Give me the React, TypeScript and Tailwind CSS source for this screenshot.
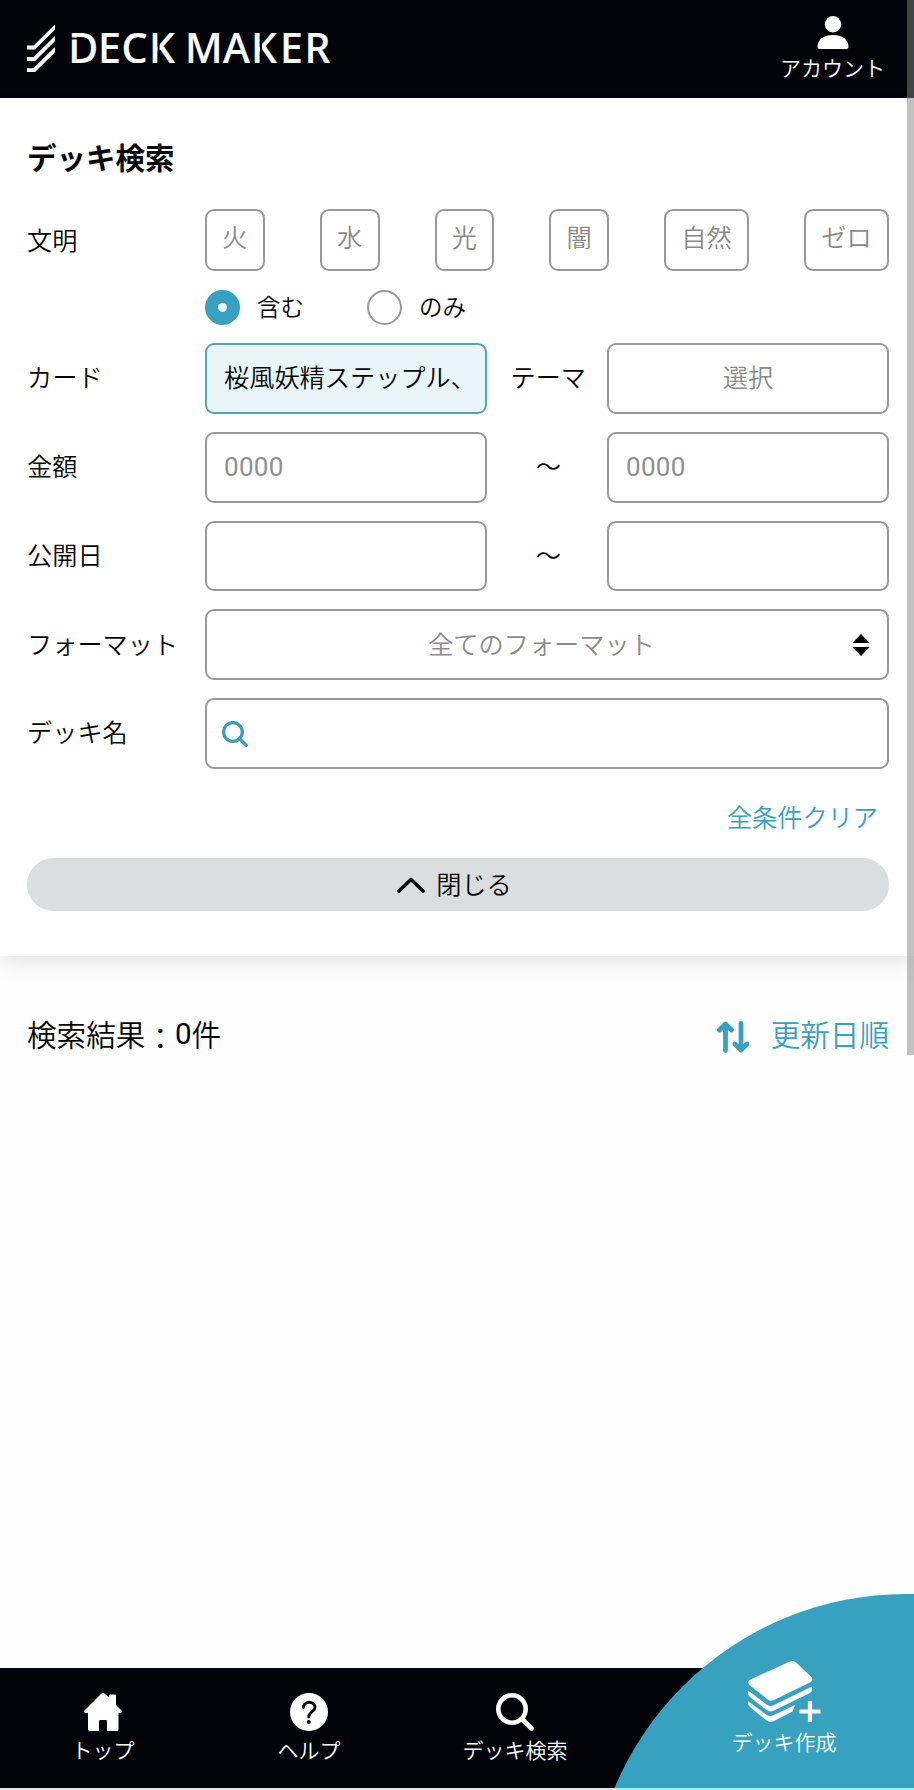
import type { ReactNode } from "react";

const chips = ["火", "水", "光", "闇", "自然", "ゼロ"];

function Logo() {
  return (
    <svg width="310" height="60" viewBox="0 0 310 60" role="img" aria-label="DECK MAKER">
      <g fill="none" stroke="#fff" strokeWidth="3.800">
        <path d="M0 31.500H7.300L29 10" />
        <path d="M0 43H7.300L29 21.500" />
        <path d="M0 54.200H7.300L29 32.700" />
      </g>
      <path d="M28 0H36V60H28Z" fill="#020409" />
      <text
        x="41.3 71 94.5 122 158 196 224 253 277.5"
        y="46.700"
        fill="#fff"
        stroke="#fff"
        strokeWidth="0.2"
        fontSize="41"
        className="font-['Noto_Sans'] font-medium"
      >
        DECKMAKER
      </text>
      <g stroke="#020409" strokeWidth="2" fill="none">
        <path d="M43 22.500H50" />
        <path d="M131.600 15V49" />
        <path d="M234 15V49" />
      </g>
    </svg>
  );
}

function Row({ label, children }: { label: string; children?: ReactNode }) {
  return (
    <div className="flex h-[70.8px] items-center">
      <div className="w-[178px] shrink-0 pb-[3px] whitespace-nowrap">{label}</div>
      <div className="flex h-full flex-1 items-center">{children}</div>
    </div>
  );
}

function Box({ children, className }: { children?: ReactNode; className: string }) {
  return <div className={`flex h-full items-center rounded-[9px] border-2 ${className}`}>{children}</div>;
}

function Middle({ children }: { children: ReactNode }) {
  return <div className="flex-1 pb-[3px] pl-[3px] text-center">{children}</div>;
}

function SearchIcon({ size, stroke, className }: { size: number; stroke: number; className?: string }) {
  return (
    <svg width={size} height={size} viewBox="0 0 38 38" fill="none" stroke="currentColor" strokeWidth={stroke} strokeLinecap="round" className={className}>
      <circle cx="16" cy="16" r="13.7" />
      <path d="M26 26L35.5 35.5" />
    </svg>
  );
}

function NavItem({ label, children }: { label: string; children: ReactNode }) {
  return (
    <div className="flex w-[206px] flex-col items-center pt-[25px]">
      {children}
      <span className="mt-[3px] text-[21px] leading-[30px]">{label}</span>
    </div>
  );
}

export default function App() {
  return (
    <div className="relative flex h-[1790px] w-[914px] flex-col overflow-hidden bg-[#fefefe] font-['Noto_Sans_CJK_JP_DemiLight','Noto_Sans_CJK_JP',sans-serif] text-[25.2px] leading-none font-[350] text-[#050505]">
      <header className="flex h-[97.5px] shrink-0 justify-between bg-[#020409] pt-[16px] pr-[29px] pl-[27px] text-white">
        <Logo />
        <div className="flex flex-col items-center">
          <svg width="32" height="34" viewBox="0 0 32 34" fill="#fff">
            <circle cx="16" cy="8.3" r="8.2" />
            <path d="M.5 31C.5 23 7 19 16 19s15.500 4 15.500 12q0 2-2 2H2.500q-2 0-2-2Z" />
          </svg>
          <span className="mt-[2px] text-[21px] leading-[30px]">アカウント</span>
        </div>
      </header>

      <section className="flex h-[858px] shrink-0 flex-col bg-white pr-[25px] pl-[27px] shadow-[0_10px_20px_-2px_rgba(0,0,0,0.1)]">
        <h1 className="mt-[41.5px] font-['Noto_Sans_CJK_JP',sans-serif] text-[29.5px] leading-[34px] font-bold">デッキ検索</h1>

        <div className="mt-[36px] flex h-[62px] items-center">
          <div className="w-[178px] shrink-0">文明</div>
          <div className="flex h-full flex-1 justify-between text-[#8a8a8a]">
            {chips.map((c) => (
              <div key={c} className="flex h-full items-center rounded-[9px] border-2 border-[#999] px-[15.3px] pb-[6px]">
                {c}
              </div>
            ))}
          </div>
        </div>

        <div className="mt-[18px] ml-[178px] flex h-[36px] items-center text-[23.5px]">
          <span className="flex size-[35px] items-center justify-center rounded-full bg-[#38a1bf]">
            <span className="size-[9px] rounded-full bg-[#effcff]" />
          </span>
          <span className="ml-[17px] w-[110px] pb-[1px]">含む</span>
          <span className="size-[35px] rounded-full border-2 border-[#999]" />
          <span className="ml-[17px] pb-[1px]">のみ</span>
        </div>

        <div className="mt-[18px] flex flex-col gap-[18px]">
          <Row label="カード">
            <Box className="w-[281.5px] border-[#55a5b5] bg-[#e9f5f9] pb-[3px] pl-[17px] whitespace-nowrap">桜風妖精ステップル、</Box>
            <Middle>テーマ</Middle>
            <Box className="w-[282px] justify-center border-[#999] pb-[3px] text-[#8a8a8a]">選択</Box>
          </Row>
          <Row label="金額">
            <Box className="w-[281.5px] border-[#999] pl-[17px] font-[Roboto] text-[26px] font-normal tracking-[0.3px] text-[#8f8f8f]">0000</Box>
            <Middle>～</Middle>
            <Box className="w-[282px] border-[#999] pl-[17px] font-[Roboto] text-[26px] font-normal tracking-[0.3px] text-[#8f8f8f]">0000</Box>
          </Row>
          <Row label="公開日">
            <Box className="w-[281.5px] border-[#999]" />
            <Middle>～</Middle>
            <Box className="w-[282px] border-[#999]" />
          </Row>
          <Row label="フォーマット">
            <Box className="w-full border-[#999] pr-[17px] text-[#8a8a8a]">
              <span className="flex-1 pb-[3px] pl-[24px] text-center">全てのフォーマット</span>
              <svg width="18" height="22" viewBox="0 0 18 22" fill="#050505">
                <path d="M9 0L17.700 9H.3ZM.3 13H17.700L9 22Z" />
              </svg>
            </Box>
          </Row>
          <Row label="デッキ名">
            <Box className="w-full border-[#999] pl-[15px]">
              <SearchIcon size={26} stroke={4.8} className="text-[#3a9eb5]" />
            </Box>
          </Row>
        </div>

        <div className="mt-[34.5px] pr-[11px] text-right leading-[26px] text-[#38a1bf]">全条件クリア</div>

        <div className="mt-[29px] flex h-[53px] items-center justify-center rounded-full bg-[#dbdedf] pr-[7px]">
          <svg width="28" height="16" viewBox="0 0 28 16" fill="none" stroke="#050505" strokeWidth="3.600" strokeLinecap="round" strokeLinejoin="round">
            <path d="M2 14L14 2.500L26 14" />
          </svg>
          <span className="ml-[11px] pb-[3px]">閉じる</span>
        </div>
      </section>

      <div className="mt-[62px] flex h-[36px] shrink-0 items-center justify-between pr-[25px] pl-[27px] text-[29.6px]">
        <span className="flex pb-[1px] whitespace-nowrap">
          検索結果<span className="pt-[3px] font-medium">：</span>
          <span className="font-[Roboto] leading-[31px] font-normal">0</span>件
        </span>
        <div className="flex items-center text-[#38a1bf]">
          <svg width="32" height="32" viewBox="0 0 32 32" fill="none" stroke="currentColor" strokeWidth="4.800" strokeLinecap="round" strokeLinejoin="round" className="mt-[2px] mr-[22px]">
            <path d="M8.500 29.500V4M2.500 9L8.500 3L14.500 9M24 2.500V28M18 23L24 29L30 23" />
          </svg>
          <span className="pb-[3px]">更新日順</span>
        </div>
      </div>

      <nav className="mt-auto mb-[2px] flex h-[120.5px] shrink-0 bg-[#020409] text-white">
        <NavItem label="トップ">
          <svg width="38" height="38" viewBox="0 0 38 38" fill="#fff">
            <path d="M19 0Q20 0 21 1L25 4.500V2.500Q25 1.500 26 1.500H31Q32 1.500 32 2.500V12L37.500 17.500Q38.500 19 37 20H34.500V36.500Q34.500 38 33 38H23V28Q23 27 22 27H16Q15 27 15 28V38H5.500Q4 38 4 36.500V20H1Q-.5 19 .5 17.500L17 1Q18 0 19 0Z" />
          </svg>
        </NavItem>
        <NavItem label="ヘルプ">
          <svg width="38" height="38" viewBox="0 0 38 38">
            <circle cx="19" cy="19" r="19" fill="#fff" />
            <path d="M13.500 14.500C13.500 7.500 25 7.500 25 14.500C25 19 18.700 19 18.700 24" fill="none" stroke="#020409" strokeWidth="2.800" strokeLinecap="round" />
            <circle cx="18.700" cy="29" r="2" fill="#020409" />
          </svg>
        </NavItem>
        <NavItem label="デッキ検索">
          <SearchIcon size={38} stroke={4.6} />
        </NavItem>
      </nav>

      <div className="absolute right-[-308px] bottom-[-442px] h-[638px] w-[632px] overflow-hidden rounded-full bg-[#38a1bf]" />
      <div className="absolute bottom-[34px] left-[724px] flex w-[120px] flex-col items-center text-white">
        <svg width="74" height="64" viewBox="0 0 74 64" fill="#fff">
          <path d="M43 1.500Q46.500 0 49 2.500L64 16.500Q67 20 63 22.500L27 40Q23 42 20 39L2 24.500Q0 21 3.500 19.500Z" />
          <path d="M1 30.500L19.500 44.500Q23 47 27 45L65 26.500V30Q65 32 63 33L27 50.500Q23 52.500 19.500 50L3 37Q1 35 1 33Z" />
          <path d="M1 41L19.500 55Q23 57 27 55L48 45L45.500 51.500L27 61Q23 63 19.500 60.500L3 47Q1 45 1 43Z" />
          <path d="M63 41V62M52.500 51.500H73.500" stroke="#fff" strokeWidth="4.200" />
        </svg>
        <span className="mt-[2px] text-[21px] leading-[30px]">デッキ作成</span>
      </div>
      <div className="absolute bottom-0 left-0 h-[2px] w-[615px] bg-[#e2e3e5]" />
      <div className="absolute right-0 bottom-0 h-[2px] w-[299px] bg-[#a2f0fa]" />
      <div className="absolute top-0 right-0 h-[1055px] w-[7px] bg-[#838383]/50" />
    </div>
  );
}
